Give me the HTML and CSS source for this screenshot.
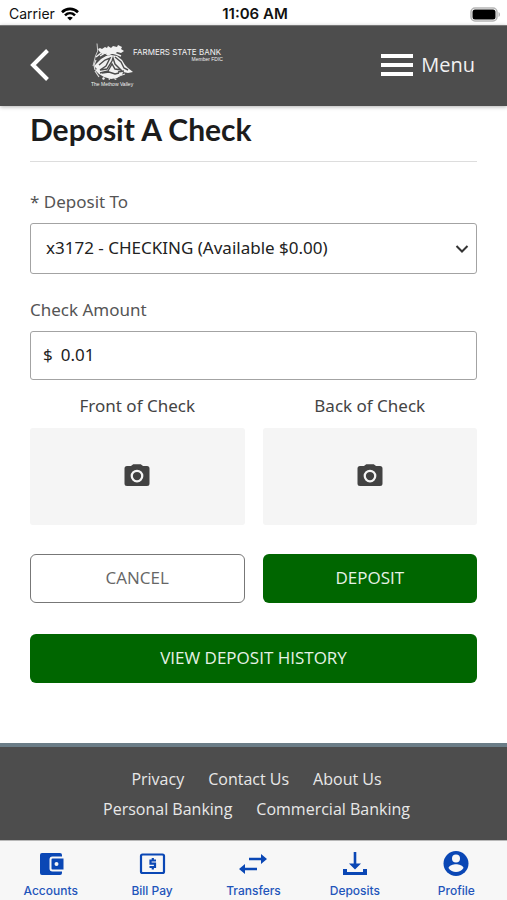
FILE: index.html
```html
<!DOCTYPE html>
<html lang="en">
<head>
<meta charset="utf-8">
<meta name="viewport" content="width=device-width, initial-scale=1">
<title>Deposit A Check</title>
<link rel="stylesheet" href="styles.css">
</head>
<body>
<div class="status">
  <div class="status-left">
    <span>Carrier</span>
    <svg width="18" height="14" viewBox="0 0 18 14" fill="none" stroke="#000" stroke-width="2.6" aria-hidden="true">
      <path d="M1 5.2C5.5.8 12.500.8 17 5.200"/>
      <path d="M4 8.400c2.900-2.800 7.100-2.800 10 0"/>
      <path d="M9 13.600 6.200 10.800c1.600-1.500 4-1.500 5.600 0z" fill="#000" stroke="none"/>
    </svg>
  </div>
  <span class="status-time">11:06 AM</span>
  <div class="status-right">
    <svg width="31" height="15" viewBox="0 0 31 15" aria-hidden="true">
      <rect x="1" y="1" width="26" height="13" rx="4" fill="#fff" stroke="#b5b5b5" stroke-width="1.500"/>
      <rect x="2.500" y="2.500" width="23" height="10" rx="2.500" fill="#000"/>
      <path d="M28.500 5v5c2-.8 2-4.200 0-5z" fill="#b5b5b5"/>
    </svg>
  </div>
</div>

<header class="header">
  <button class="back" type="button" aria-label="Back">
    <svg width="20" height="34" viewBox="0 0 20 34" fill="none" stroke="#fff" stroke-width="4"><path d="M17.500 2.500 3 17l14.500 14.500"/></svg>
  </button>
  <a class="logo" href="#" aria-label="Farmers State Bank">
    <svg width="140" height="48" viewBox="0 -1 140 48" fill="#f2f2f2">
      <path d="M6 1.500 6.700 9 4.500 14 2 24" fill="none" stroke="#ccc" stroke-width="1"/>
      <path d="M7 7l2-1 2 1 3-2 2 1 1-2 3 2 2-2 4 1 1-2 4 2-1 2 3 2-3 2-4-1-2 2-4-1-3 2-2-2-4 1-3-3z"/>
      <path d="M5 15l5-4M9 14l5-3 3 2 4-2 4 1 5 2" fill="none" stroke="#f2f2f2" stroke-width="1.400"/>
      <path d="M6 21l4-4 5-3 5-1 6 1 5 4 3 5 3 3 5 4-5 1-5-1-1 3-5 3-6 1-7-2-5-3-4-4 2-1-3-3z"/>
      <path d="M8 23l6-5 5-2-4 8-6 4 7-1 5-8 1-3 2 6 6 6-6-1-3-5-4 7-8 2M24 15l6 5 3 6 4 2M27 30l6-1M11 31l7-1 6 2 4-1" fill="none" stroke="#4d4d4d" stroke-width="1.400"/>
      <path d="M5 18l-2 5 1 5M4 29l4 6M28 34l6-2" fill="none" stroke="#ddd" stroke-width="1.200"/>
      <path d="M11 36l2-1 1 2-2 1zM17 37l2-1v2zM23 36l3 1-2 1z"/>
      <text class="logo-tag" x="0" y="44">The Methow Valley</text>
      <text class="logo-name" x="42" y="13">FARMERS STATE BANK</text>
      <text class="logo-tag" x="132" y="19" text-anchor="end">Member FDIC</text>
    </svg>
  </a>
  <button class="menu" type="button">
    <svg width="32" height="24" viewBox="0 0 32 24" fill="#fff" aria-hidden="true"><path d="M0 1h32v4H0zM0 10h32v4H0zM0 19h32v4H0z"/></svg>
    <span>Menu</span>
  </button>
</header>

<main class="main">
  <h1 class="title">Deposit A Check</h1>
  <form>
    <label class="label label-first" for="account">* Deposit To</label>
    <div class="select-wrap">
      <select class="field select" id="account"><option>x3172 - CHECKING (Available $0.00)</option></select>
      <svg class="chevron" width="14" height="10" viewBox="0 0 14 10" fill="none" stroke="#333" stroke-width="2" aria-hidden="true"><path d="M1.500 2 7 7.500 12.500 2"/></svg>
    </div>
    <label class="label" for="amount">Check Amount</label>
    <div class="field amount">
      <span>$</span>
      <input id="amount" type="text" inputmode="decimal" value="0.01">
    </div>
    <div class="pair photos">
      <div>
        <span class="photo-label" id="front">Front of Check</span>
        <button class="photo" type="button" aria-labelledby="front">
          <svg width="30" height="30" viewBox="0 0 24 24" fill="#424242"><path d="M9 2.500 7.170 4H4a2 2 0 0 0-2 2v12a2 2 0 0 0 2 2h16a2 2 0 0 0 2-2V6a2 2 0 0 0-2-2h-3.170L15 2.500z"/><circle cx="12" cy="12" r="4.200" fill="none" stroke="#f5f5f5" stroke-width="1.800"/></svg>
        </button>
      </div>
      <div>
        <span class="photo-label" id="back">Back of Check</span>
        <button class="photo" type="button" aria-labelledby="back">
          <svg width="30" height="30" viewBox="0 0 24 24" fill="#424242"><path d="M9 2.500 7.170 4H4a2 2 0 0 0-2 2v12a2 2 0 0 0 2 2h16a2 2 0 0 0 2-2V6a2 2 0 0 0-2-2h-3.170L15 2.500z"/><circle cx="12" cy="12" r="4.200" fill="none" stroke="#f5f5f5" stroke-width="1.800"/></svg>
        </button>
      </div>
    </div>
    <div class="pair actions">
      <button class="btn btn-outline" type="button">CANCEL</button>
      <button class="btn" type="submit">DEPOSIT</button>
    </div>
    <button class="btn btn-wide" type="button">VIEW DEPOSIT HISTORY</button>
  </form>
</main>

<footer class="footer">
  <a href="#">Privacy</a>
  <a href="#">Contact Us</a>
  <a href="#">About Us</a>
  <a href="#">Personal Banking</a>
  <a href="#">Commercial Banking</a>
</footer>

<nav class="tabs">
  <a href="#">
    <svg width="28" height="28" viewBox="0 0 28 28" fill="#0a47b5"><path d="M5 3h18a2 2 0 0 1 2 2v1.500H15.500a3 3 0 0 0-3 3v9a3 3 0 0 0 3 3H25V23a2 2 0 0 1-2 2H5a2 2 0 0 1-2-2V5a2 2 0 0 1 2-2z"/><path fill-rule="evenodd" d="M15.500 8.500h11v11h-11a1 1 0 0 1-1-1v-9a1 1 0 0 1 1-1zM19.500 12a2 2 0 1 0 0 4 2 2 0 0 0 0-4z"/></svg>
    <span>Accounts</span>
  </a>
  <a href="#">
    <svg width="28" height="28" viewBox="0 0 28 28" fill="none" stroke="#0a47b5" stroke-width="2.200"><rect x="3" y="4.500" width="23" height="18.500" rx="1.500"/><path d="M18 10.500h-5.500v3.200h4.500v3.300h-5.500M14.800 8v2.500M14.800 17v2.500"/></svg>
    <span>Bill Pay</span>
  </a>
  <a href="#">
    <svg width="28" height="28" viewBox="0 0 28 28" fill="#0a47b5"><path d="M10 7.700h12V4l6 5-6 5v-3.700H10zM18 17.700H6V14l-6 5 6 5v-3.700h12z"/></svg>
    <span>Transfers</span>
  </a>
  <a href="#">
    <svg width="28" height="28" viewBox="0 0 28 28" fill="#0a47b5"><path d="M12.700 2h2.600v11.500H20l-6 6-6-6h4.700zM2 19h4v3h16v-3h4v6H2z"/></svg>
    <span>Deposits</span>
  </a>
  <a href="#">
    <svg width="28" height="28" viewBox="0 0 28 28"><circle cx="14" cy="13.500" r="12.500" fill="#0a47b5"/><circle cx="14" cy="8.500" r="4" fill="#f7f7f7"/><path d="M6.500 18c0-2.500 5-3.800 7.500-3.800s7.500 1.300 7.500 3.800a9 9 0 0 1-15 0z" fill="#f7f7f7"/></svg>
    <span>Profile</span>
  </a>
</nav>
</body>
</html>
```
FILE: styles.css
```css
* {
  box-sizing: border-box;
}

body {
  display: flex;
  flex-direction: column;
  min-height: 100vh;
  margin: 0;
  background: #fff;
  color: #222;
  font-family: "Noto Sans", sans-serif;
  font-size: 17px;
  line-height: 24px;
}

button,
input,
select {
  margin: 0;
  padding: 0;
  border: 0;
  background: none;
  color: inherit;
  font: inherit;
}

a {
  color: inherit;
  text-decoration: none;
}

svg {
  display: block;
  flex: none;
}

.status {
  display: grid;
  grid-template-columns: 1fr auto 1fr;
  align-items: center;
  height: 25px;
  padding: 2px 6px 0 9px;
  color: #111;
  font-family: Inter, sans-serif;
  font-size: 14px;
}

.status-left {
  display: flex;
  align-items: center;
  gap: 6px;
}

.status-time {
  font-size: 15px;
  font-weight: 600;
}

.status-right {
  justify-self: end;
}

.header {
  display: flex;
  align-items: center;
  height: 81px;
  padding: 0 32px 2px 30px;
  border-top: 1px solid #777;
  background: #4d4d4d;
  color: #f2f2f2;
  box-shadow: 0 1px 4px rgba(0, 0, 0, 0.3);
}

.logo {
  margin-left: 41px;
}

.logo-name {
  font-family: Inter, sans-serif;
  font-size: 8px;
}

.logo-tag {
  font-family: "Liberation Sans", sans-serif;
  font-size: 5px;
}

.menu {
  display: flex;
  align-items: center;
  gap: 8px;
  margin-left: auto;
  font-family: "Open Sans", sans-serif;
  font-size: 20px;
}

.main {
  flex: 1;
  padding: 3px 30px 60px;
}

.title {
  margin: 0;
  padding-bottom: 12px;
  border-bottom: 1px solid #ddd;
  color: #1c1c1c;
  font-family: Lato, sans-serif;
  font-size: 30px;
  font-weight: 700;
  line-height: 40px;
}

.label {
  display: block;
  margin: 24px 0 9px;
  color: #555;
}

.label-first {
  margin-top: 28px;
}

.field {
  width: 100%;
  border: 1px solid #a3a3a3;
  border-radius: 3px;
  background: #fff;
}

.select-wrap {
  position: relative;
}

.select {
  display: block;
  height: 51px;
  padding: 0 32px 2px 15px;
  appearance: none;
}

.chevron {
  position: absolute;
  top: 21px;
  right: 8px;
  pointer-events: none;
}

.amount {
  display: flex;
  align-items: center;
  gap: 8px;
  height: 49px;
  padding: 0 12px 2px;
}

.amount input {
  flex: 1;
  min-width: 0;
}

.pair {
  display: grid;
  grid-template-columns: 1fr 1fr;
  gap: 18px;
}

.photos {
  margin-top: 14px;
}

.photo-label {
  display: block;
  margin-bottom: 10px;
  color: #444;
  text-align: center;
}

.photo {
  display: flex;
  align-items: center;
  justify-content: center;
  width: 100%;
  height: 97px;
  padding-bottom: 2px;
  border-radius: 3px;
  background: #f5f5f5;
}

.actions {
  margin-top: 29px;
}

.btn {
  height: 49px;
  padding-bottom: 2px;
  border-radius: 6px;
  background: #006600;
  color: #e6f2e6;
  font-family: "Open Sans", sans-serif;
}

.btn-outline {
  border: 1px solid #777;
  background: #fff;
  color: #666;
}

.btn-wide {
  width: 100%;
  margin-top: 31px;
}

.footer {
  display: flex;
  flex-wrap: wrap;
  justify-content: center;
  column-gap: 24px;
  padding: 17px 58px 16px 64px;
  border-top: 4px solid #6b7d87;
  background: #4d4d4d;
  color: #e8e8e8;
  font-family: "Open Sans", sans-serif;
  font-size: 16px;
  line-height: 30px;
}

.tabs {
  display: grid;
  grid-template-columns: repeat(5, 1fr);
  height: 61px;
  padding-top: 9px;
  border-top: 1px solid #b8b8b8;
  background: #f7f7f7;
  color: #1f55bb;
  font-family: Inter, sans-serif;
  font-size: 12px;
  font-weight: 500;
  line-height: 26px;
}

.tabs a {
  display: flex;
  flex-direction: column;
  align-items: center;
}
```
